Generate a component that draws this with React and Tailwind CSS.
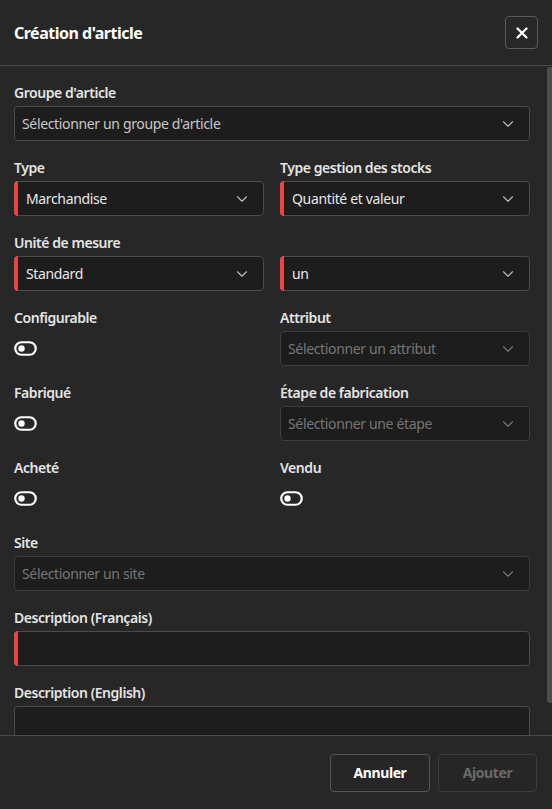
import { ChevronDown, X } from "lucide-react";

function Label({ children }) {
  return (
    <div className="mb-[4px] h-[18px] text-sm font-semibold leading-[18px] tracking-[-0.45px] text-[#e4e4e4]">
      {children}
    </div>
  );
}

function Select({ value, placeholder, required, muted }) {
  return (
    <div
      className={`relative flex h-[35px] items-center justify-between rounded-[4px] border bg-[#1d1d1d] pr-3 ${
        muted ? "border-[#3e3e3e]" : "border-[#4b4b4b]"
      } ${required ? "pl-[11px]" : "pl-[7px]"}`}
    >
      {required && (
        <span className="absolute -left-px -top-px -bottom-px w-[4px] rounded-l-[4px] bg-[#ef4444]" />
      )}
      <span
        className={`text-sm tracking-[-0.35px] ${
          value ? "text-[#e8e8e8]" : muted ? "text-[#767676]" : "text-[#c8c8c8]"
        }`}
      >
        {value || placeholder}
      </span>
      <ChevronDown
        size={18}
        strokeWidth={1.5}
        className={muted ? "text-[#777]" : "text-[#bdbdbd]"}
      />
    </div>
  );
}

function TextBox({ required }) {
  return (
    <div className="relative h-[35px] rounded-[4px] border border-[#4b4b4b] bg-[#1d1d1d]">
      {required && (
        <span className="absolute -left-px -top-px -bottom-px w-[4px] rounded-l-[4px] bg-[#ef4444]" />
      )}
    </div>
  );
}

function Toggle() {
  return (
    <div className="flex h-[35px] items-center">
      <svg width="23" height="15" viewBox="0 0 23 15">
        <rect
          x="1.25"
          y="1.25"
          width="20.5"
          height="12.5"
          rx="6.25"
          fill="none"
          stroke="#ffffff"
          strokeWidth="2.2"
        />
        <circle cx="7.5" cy="7.5" r="3.2" fill="#ffffff" />
      </svg>
    </div>
  );
}

function Field({ label, children }) {
  return (
    <div className="flex flex-col">
      <Label>{label}</Label>
      {children}
    </div>
  );
}

export default function App() {
  return (
    <div
      className="flex h-[809px] w-[552px] flex-col overflow-hidden bg-[#272727] text-white"
      style={{ fontFamily: '"Noto Sans", "Open Sans", sans-serif' }}
    >
      <header className="flex h-[66px] shrink-0 items-center justify-between border-b border-[#4a4a4a] pl-[14px] pr-[14px]">
        <h1 className="text-base font-bold tracking-[-0.5px] text-white">Création d'article</h1>
        <button className="flex h-[33px] w-[33px] items-center justify-center rounded-[4px] border border-[#5a5a5a]">
          <X size={18} strokeWidth={3} className="text-white" />
        </button>
      </header>

      <div className="relative flex-1 overflow-hidden">
        <div className="flex flex-col gap-[18px] pl-[14px] pr-[22px] pt-[18px]">
          <Field label="Groupe d'article">
            <Select placeholder="Sélectionner un groupe d'article" />
          </Field>

          <div className="grid grid-cols-2 gap-x-[16px] gap-y-[18px]">
            <Field label="Type">
              <Select value="Marchandise" required />
            </Field>
            <Field label="Type gestion des stocks">
              <Select value="Quantité et valeur" required />
            </Field>
            <Field label="Unité de mesure">
              <Select value="Standard" required />
            </Field>
            <Field label={"\u00a0"}>
              <Select value="un" required />
            </Field>
            <Field label="Configurable">
              <Toggle />
            </Field>
            <Field label="Attribut">
              <Select placeholder="Sélectionner un attribut" muted />
            </Field>
            <Field label="Fabriqué">
              <Toggle />
            </Field>
            <Field label="Étape de fabrication">
              <Select placeholder="Sélectionner une étape" muted />
            </Field>
            <Field label="Acheté">
              <Toggle />
            </Field>
            <Field label="Vendu">
              <Toggle />
            </Field>
          </div>

          <Field label="Site">
            <Select placeholder="Sélectionner un site" muted />
          </Field>
          <Field label="Description (Français)">
            <TextBox required />
          </Field>
          <Field label="Description (English)">
            <TextBox />
          </Field>
        </div>
        <div className="absolute right-0 top-[1px] h-[636px] w-[5px] rounded-l-[3px] bg-[#4d4d4d]" />
      </div>

      <footer className="flex h-[74px] shrink-0 items-center justify-end gap-[8px] border-t border-[#4a4a4a] pr-[15px]">
        <button className="h-[38px] w-[100px] rounded-[4px] border border-[#575757] bg-[#262626] text-sm font-bold tracking-[-0.4px] text-white">
          Annuler
        </button>
        <button className="h-[38px] w-[99px] rounded-[4px] border border-[#3c3c3c] bg-[#262626] text-sm font-bold tracking-[-0.4px] text-[#6a6a6a]">
          Ajouter
        </button>
      </footer>
    </div>
  );
}
